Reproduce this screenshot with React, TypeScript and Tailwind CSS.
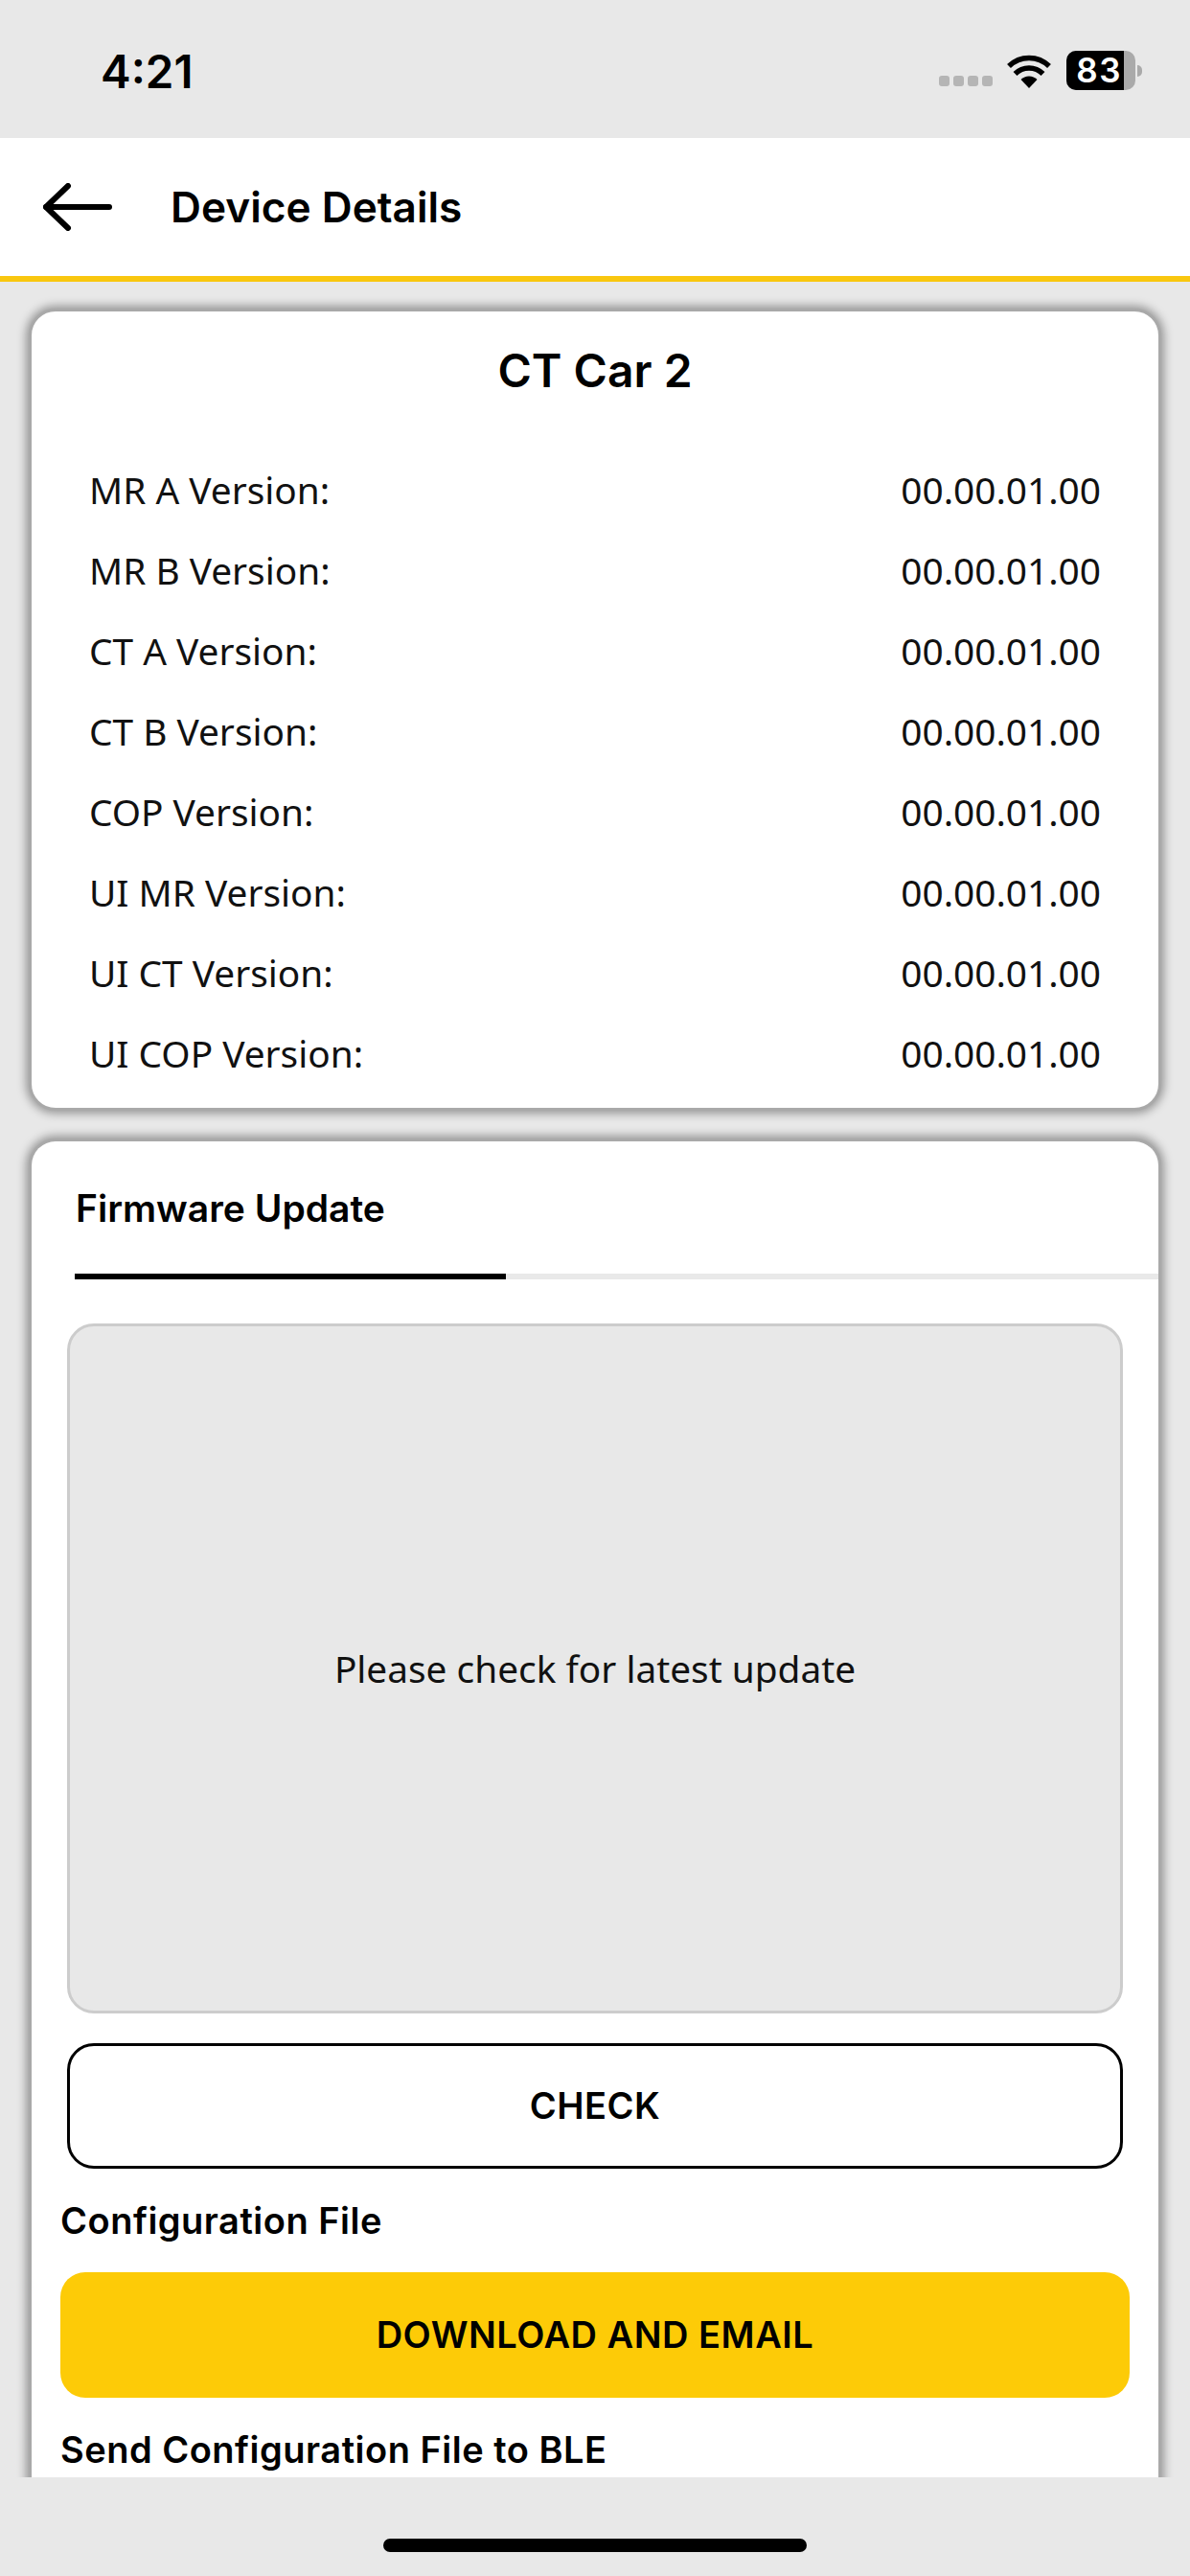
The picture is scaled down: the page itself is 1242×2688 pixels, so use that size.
const versions = [
  'MR A Version:',
  'MR B Version:',
  'CT A Version:',
  'CT B Version:',
  'COP Version:',
  'UI MR Version:',
  'UI CT Version:',
  'UI COP Version:',
];

const inter = 'font-["Inter",sans-serif]';

function StatusBar() {
  return (
    <div className="flex h-[144px] items-center justify-between pl-[105px] pr-[50px] pt-[3px]">
      <span className={`${inter} mt-[2px] text-[47.5px] font-semibold leading-none text-black`}>4:21</span>
      <div className="flex items-center">
        {/* no service dots */}
        <div className="mt-[22px] flex gap-1">
          <div className="h-[11px] w-[11px] rounded-[3px] bg-[#b5b5b5]" />
          <div className="h-[11px] w-[11px] rounded-[3px] bg-[#b5b5b5]" />
          <div className="h-[11px] w-[11px] rounded-[3px] bg-[#b5b5b5]" />
          <div className="h-[11px] w-[11px] rounded-[3px] bg-[#b5b5b5]" />
        </div>
        <svg className="ml-[14px]" width="48" height="36" viewBox="0 0 48 36">
          <path d="M24 36 L15.5 27 A12 12 0 0 1 32.5 27 Z" fill="#000" />
          <path d="M9.5 21 A20.5 20.5 0 0 1 38.5 21" fill="none" stroke="#000" strokeWidth="5.5" />
          <path d="M3 13 A30 30 0 0 1 45 13" fill="none" stroke="#000" strokeWidth="5.5" />
        </svg>
        {/* battery */}
        <div className="relative ml-[15px] flex h-[41px] w-[72px] overflow-hidden rounded-[10px] bg-[#aaaaaa]">
          <div className="flex h-full w-[60px] items-center justify-end bg-black pr-[2px]">
            <span className={`${inter} text-[35px] font-semibold leading-none tracking-[1.5px] text-white`}>83</span>
          </div>
        </div>
        <div className="ml-[2px] h-[12px] w-[5px] rounded-r-full bg-[#aaaaaa]" />
      </div>
    </div>
  );
}

function Header() {
  return (
    <div className="flex h-[150px] items-center border-b-[6px] border-[#f9c70f] bg-white pl-[45px]">
      <svg width="72" height="50" viewBox="0 0 72 50" fill="none" stroke="#000" strokeWidth="6" strokeLinecap="round" strokeLinejoin="round">
        <path d="M69 25 H3" />
        <path d="M26 3 L3 25 L26 47" />
      </svg>
      <h1 className={`${inter} ml-[61px] text-[44.2px] font-semibold leading-none text-black`}>Device Details</h1>
    </div>
  );
}

function VersionCard() {
  return (
    <div className="h-[837px] rounded-[28px] border-[3px] border-[#a9a9a9] bg-white px-[60px] pt-[33px] shadow-[0_0_10px_3px_rgba(0,0,0,0.35)]">
      <h2 className={`${inter} text-center text-[48px] font-semibold leading-[58px] text-black`}>CT Car 2</h2>
      <div className="mt-[53px] flex flex-col">
        {versions.map((name) => (
          <div key={name} className='flex h-[84px] items-center justify-between font-["Noto_Sans",sans-serif] text-[38.8px] text-[#111111]'>
            <span>{name}</span>
            <span>00.00.01.00</span>
          </div>
        ))}
      </div>
    </div>
  );
}

function FirmwareCard() {
  return (
    <div className="mt-[29px] h-[1500px] rounded-t-[28px] border-x-[3px] border-t-[3px] border-[#a9a9a9] bg-white pt-[47px] shadow-[0_0_10px_3px_rgba(0,0,0,0.35)]">
      <div className={`${inter} pl-[46px] text-[39px] font-semibold leading-[45px] text-black`}>Firmware Update</div>
      {/* tab bar */}
      <div className="mt-[46px] flex pl-[45px]">
        <div className="h-[6px] w-[450px] bg-black" />
        <div className="h-[6px] flex-1 bg-[#e9e9e9]" />
      </div>
      <div className="px-[37px] pt-[46px]">
        <div className="flex h-[720px] items-center justify-center rounded-[28px] border-[3px] border-[#cccccc] bg-[#e8e8e8] font-['Noto_Sans',sans-serif] text-[38.8px] text-[#111111]">
          Please check for latest update
        </div>
        <button className={`${inter} mt-[31px] h-[131px] w-full rounded-[28px] border-[3px] border-black bg-white text-[38px] font-semibold tracking-[0.5px] text-black`}>
          CHECK
        </button>
      </div>
      <div className={`${inter} px-[30px] text-[38px] font-semibold tracking-[0.5px] text-black`}>
        <div className="mt-[32px] leading-[45px]">Configuration File</div>
        <button className="mt-[31px] h-[131px] w-full rounded-[26px] bg-[#fdcb07] text-[38px] font-semibold tracking-[0.5px] text-black">
          DOWNLOAD AND EMAIL
        </button>
        <div className="mt-[32px] leading-[45px]">Send Configuration File to BLE</div>
      </div>
    </div>
  );
}

export default function App() {
  return (
    <div className="flex h-[2688px] w-[1242px] flex-col overflow-hidden bg-[#e8e8e8]">
      <StatusBar />
      <Header />
      <div className="h-[2291px] overflow-hidden px-[30px] pt-[28px]">
        <VersionCard />
        <FirmwareCard />
      </div>
      {/* home indicator */}
      <div className="flex flex-1 justify-center pt-[64px]">
        <div className="h-[14px] w-[442px] rounded-full bg-black" />
      </div>
    </div>
  );
}
